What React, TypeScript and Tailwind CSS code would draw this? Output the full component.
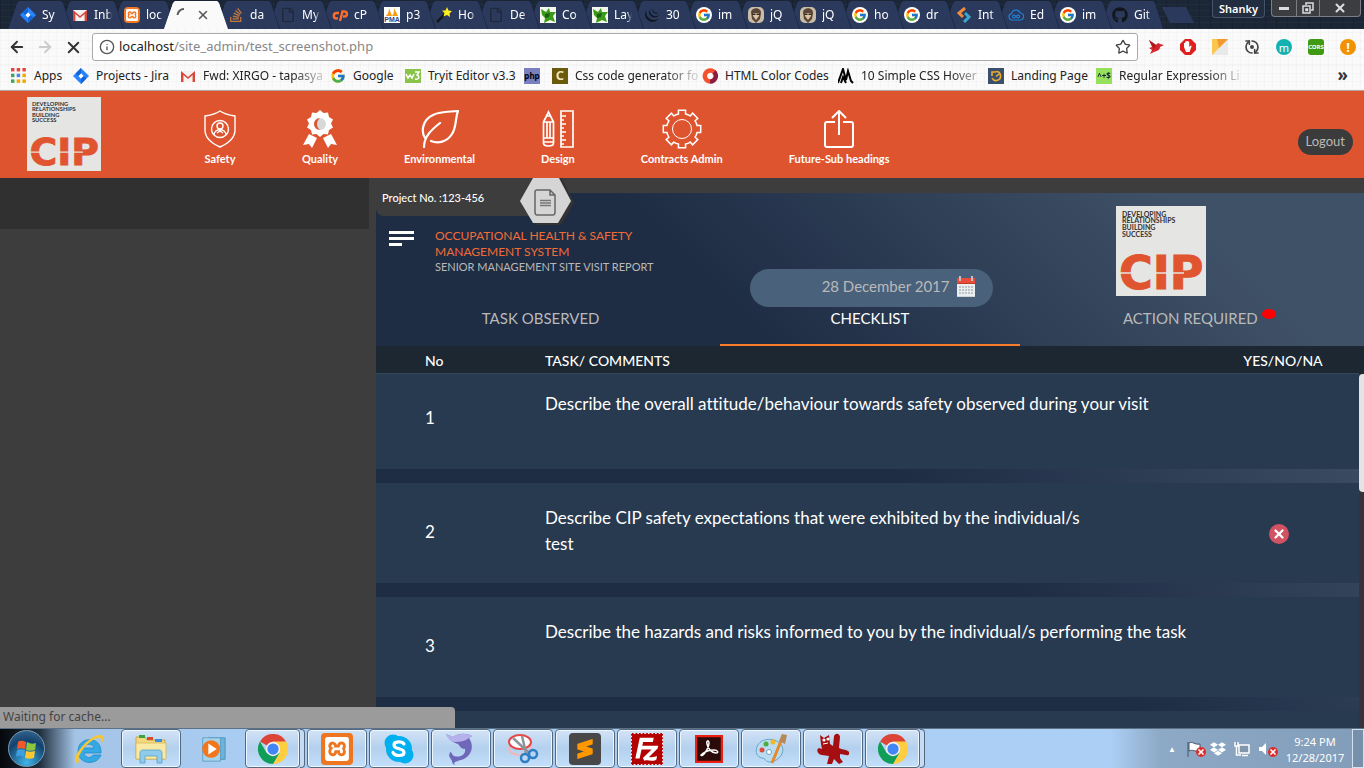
import React from "react";
import { FcGoogle } from "react-icons/fc";
import { FaStackOverflow, FaGithub, FaDropbox } from "react-icons/fa";
import { SiXampp, SiFilezilla, SiJquery, SiSublimetext } from "react-icons/si";
import { ArrowLeft, ArrowRight, X, Info, Star, File, RefreshCw } from "lucide-react";

/* ---------- small icons ---------- */

const Gmail = () => (
  <svg viewBox="0 0 16 16" className="size-4">
    <path d="M1 3h14v11H1z" fill="#f4f1ee" />
    <path d="M1 14V3l7 6 7-6v11h-2.4V7L8 11 3.400 7v7z" fill="#d8453b" />
  </svg>
);
const Jira = () => (
  <svg viewBox="0 0 16 16" className="size-4">
    <path d="M8 0l8 8-8 8-8-8z" fill="#2684ff" />
    <path d="M8 5.300L10.700 8 8 10.700 5.300 8z" fill="#fff" />
    <path d="M8 0v5.300L5.300 8 2.600 5.400zM8 16v-5.300L10.700 8l2.700 2.600z" fill="#1264d8" />
  </svg>
);
const Xampp = () => (
  <span className="flex size-4 items-center justify-center rounded-sm bg-[#f37623] text-white">
    <SiXampp className="size-3" />
  </span>
);
const PageIcon = () => <File className="size-4 text-[#20283a]" strokeWidth={2} />;
const CPanel = () => (
  <svg viewBox="0 0 16 16" className="size-4" fill="none" stroke="#ff6c2c" strokeWidth="2.400">
    <path d="M7 6H4.500a2.700 2.700 0 0 0 0 5.400H6" />
    <path d="M8 14l2.500-9.500H12.500a2.500 2.500 0 0 1 0 5H11" />
  </svg>
);
const Joomla = () => (
  <svg viewBox="0 0 16 16" className="size-4">
    <path d="M0 0h16v16H0z" fill="#f4f8ee" />
    <path d="M1 2l5 3 3-4 1 4 6 0-3 4 2 6-5-2-6 3 1-5-3-3z" fill="#3d9b1c" />
    <path d="M5 7l5-1-1 4-4 1z" fill="#1c5f12" />
  </svg>
);
const Pma = () => (
  <svg viewBox="0 0 16 16" className="size-4">
    <path d="M0 0h16v16H0z" fill="#fff" />
    <path d="M2 9C4 7 5 4 5 1l3 8zM8 9c2-2 2-5 2-8l4 8z" fill="#f89c0e" />
    <text x="8" y="15" textAnchor="middle" fontSize="7" fontWeight="700" fill="#3b3f76" fontFamily="Liberation Sans, sans-serif">PMA</text>
  </svg>
);
const Wand = () => (
  <svg viewBox="0 0 16 16" className="size-4">
    <path d="M1 15L9 7" stroke="#15181c" strokeWidth="2.500" />
    <path d="M11 0l1.500 3.500L16 4l-2.500 2.500L14 10l-3-2-3.500 1.500L8.500 6 6 3.500h3.500z" fill="#fdf01e" />
  </svg>
);
const GoogleDisc = () => (
  <span className="flex size-4 items-center justify-center rounded-full bg-white"><FcGoogle className="size-3.5" /></span>
);
const Face = () => (
  <svg viewBox="0 0 16 16" className="size-4">
    <rect width="16" height="16" rx="5" fill="#c9bda8" />
    <path d="M3 5c1-5 10-5 10 1l-1 6-4 4-4-4z" fill="#5a4536" />
    <path d="M5 6h6v3l-3 4-3-4z" fill="#dcc3a4" />
    <path d="M4.500 6.500h3v1.500h-3zM8.500 6.500h3v1.500h-3z" fill="#32271f" />
  </svg>
);
const Swirl = () => (
  <svg viewBox="0 0 16 16" className="size-4" fill="none" strokeWidth="3">
    <path d="M9 1L3 6l4 4" stroke="#f08a3c" />
    <path d="M8 15l5-5-4-4" stroke="#3aa6d0" />
  </svg>
);
const CloudLoop = () => (
  <svg viewBox="0 0 16 16" className="size-4" fill="none" stroke="#1f7fd6" strokeWidth="1.200">
    <path d="M4 13a3.200 3.200 0 0 1-.5-6.300A4.600 4.600 0 0 1 12.300 6 3.500 3.500 0 0 1 12 13z" />
    <path d="M8 9.500C6.500 7.500 4.500 8 4.500 9.500s2 2 3.500 0 3.500-1.500 3.500 0-2 2-3.500 0z" />
  </svg>
);
const Spinner = () => (
  <svg viewBox="0 0 16 16" className="size-4"><path d="M1.500 8A6.500 6.500 0 0 1 8 2" fill="none" stroke="#5a5a5a" strokeWidth="2" /></svg>
);

const Chrome = ({ className }: { className: string }) => (
  <svg viewBox="0 0 48 48" className={className}>
    <path d="M24 24L3.200 12A24 24 0 0 1 44.800 12z" fill="#db4437" />
    <path d="M24 12h20.800A24 24 0 0 1 24 48l10.400-18z" fill="#ffcd40" />
    <path d="M3.200 12A24 24 0 0 0 24 48l10.400-18H13.600z" fill="#0f9d58" />
    <circle cx="24" cy="24" r="11.500" fill="#f1f1f1" />
    <circle cx="24" cy="24" r="9" fill="#4285f4" />
  </svg>
);

/* ---------- browser chrome ---------- */

const tabs: { label: string; icon: React.ReactNode; active?: boolean }[] = [
  { label: "Sy", icon: <Jira /> },
  { label: "Inb", icon: <Gmail /> },
  { label: "loc", icon: <Xampp /> },
  { label: "", icon: <Spinner />, active: true },
  { label: "da", icon: <FaStackOverflow className="size-4 text-[#c27a3c]" /> },
  { label: "My", icon: <PageIcon /> },
  { label: "cP", icon: <CPanel /> },
  { label: "p3", icon: <Pma /> },
  { label: "Ho", icon: <Wand /> },
  { label: "De", icon: <PageIcon /> },
  { label: "Co", icon: <Joomla /> },
  { label: "Lay", icon: <Joomla /> },
  { label: "30", icon: <SiJquery className="size-3.5 text-[#10161f]" /> },
  { label: "im", icon: <GoogleDisc /> },
  { label: "jQ", icon: <Face /> },
  { label: "jQ", icon: <Face /> },
  { label: "ho", icon: <GoogleDisc /> },
  { label: "dr", icon: <GoogleDisc /> },
  { label: "Int", icon: <Swirl /> },
  { label: "Ed", icon: <CloudLoop /> },
  { label: "im", icon: <GoogleDisc /> },
  { label: "Git", icon: <FaGithub className="size-4 text-[#12161d]" /> },
];

const tabShape = "[clip-path:polygon(0_100%,9px_2px,11px_0,53px_0,55px_2px,100%_100%)]";

function TabStrip() {
  return (
    <div className="flex h-[29px] items-start justify-between bg-[#1b2636] bg-[repeating-linear-gradient(0deg,#ffffff08_0_1px,transparent_1px_6px),repeating-linear-gradient(90deg,#00000022_0_1px,transparent_1px_11px)]">
      <ul className="flex h-full items-end pl-2">
        {tabs.map((t, i) => (
          <li key={i} className="relative -mr-3 h-7 w-16 shrink-0" style={{ zIndex: t.active ? 40 : 30 - i }}>
            <div className={`h-full w-full ${tabShape} ${t.active ? "bg-[#fafafa]" : "bg-[#1a2540]"} pr-px`}>
              <div className={`flex h-full items-center pl-3 ${tabShape} ${t.active ? "bg-[#fafafa]" : "bg-[#2b3a5c]"}`}>
                <span className="flex size-4 shrink-0 items-center justify-center">{t.icon}</span>
                {t.active ? (
                  <button aria-label="Close tab" className="ml-1 text-[#555]"><X className="size-3.5" strokeWidth={2.500} /></button>
                ) : (
                  <span className="ml-1.5 w-[18px] overflow-hidden whitespace-nowrap text-[12px] text-white [mask-image:linear-gradient(90deg,#000_70%,transparent)]">{t.label}</span>
                )}
              </div>
            </div>
          </li>
        ))}
        <li className="mb-1.5 ml-2.5 h-4 w-8">
          <button aria-label="New tab" className="block h-full w-full bg-[#2b3a5c] [clip-path:polygon(0_0,75%_0,100%_100%,25%_100%)]" />
        </li>
      </ul>
      <div className="flex items-start gap-1.5 pr-[3px]">
        <button className="h-[18px] w-[53px] rounded-b-sm border border-t-0 border-[#46536a] bg-[#222e40] text-[11px] leading-4 font-semibold text-white">Shanky</button>
        <div className="flex h-[17px] overflow-hidden rounded-b-sm border border-t-0 border-[#7b7f84] bg-[#3b3d40] text-[#dcdcdc]">
          <button aria-label="Minimize" className="flex w-6 items-center justify-center"><span className="h-[3px] w-2.5 bg-[#dcdcdc]" /></button>
          <button aria-label="Restore" className="flex w-6 items-center justify-center border-x border-[#7b7f84]">
            <svg viewBox="0 0 12 12" className="size-3" fill="none" stroke="#dcdcdc" strokeWidth="1.500"><path d="M4 3V1h7v7H9M1 4h7v7H1zM4 7h1.500v1.500H4z" /></svg>
          </button>
          <button aria-label="Close" className="flex w-10 items-center justify-center"><X className="size-3.5" strokeWidth={3.500} /></button>
        </div>
      </div>
    </div>
  );
}

const texture =
  "bg-[#fafafa] bg-[repeating-linear-gradient(0deg,#00000005_0_1px,transparent_1px_8px),repeating-linear-gradient(90deg,#00000005_0_1px,transparent_1px_8px)]";

function Toolbar() {
  return (
    <div className={`flex h-9 items-center pr-2 pl-2 ${texture}`}>
      <div className="flex w-[84px] shrink-0 items-center gap-2.5">
        <button aria-label="Back"><ArrowLeft className="size-[18px] text-[#333]" strokeWidth={2.500} /></button>
        <button aria-label="Forward"><ArrowRight className="size-[18px] text-[#ccc]" strokeWidth={2.500} /></button>
        <button aria-label="Stop"><X className="size-[19px] text-[#333]" strokeWidth={2.500} /></button>
      </div>
      <div className="flex h-7 min-w-0 flex-1 items-center rounded-[3px] border border-[#aaa] bg-white px-1.5">
        <Info className="size-4 text-[#555]" />
        <span className="ml-1 flex-1 text-[13px] text-[#888]"><span className="text-[#222]">localhost</span>/site_admin/test_screenshot.php</span>
        <button aria-label="Bookmark"><Star className="size-4 text-[#444]" /></button>
      </div>
      <ul className="flex shrink-0 items-center gap-4 pl-2.5">
        <li><svg viewBox="0 0 16 16" className="size-4"><path d="M1 1l7 5c1-2 3-2 4-1l4 1-4 2c0 3-3 4-6 5l-4 2 2-4-3-2 3-1z" fill="#d5252b" /><path d="M1 1l7 5-2 4z" fill="#a8181d" /></svg></li>
        <li><svg viewBox="0 0 16 16" className="size-4"><path d="M5 0h6l5 5v6l-5 5H5l-5-5V5z" fill="#e01f1f" /><path d="M4 8V4h1.200v3V2.500h1.300V7 2h1.400v5-4.500h1.300V8l1.500-1.500 1 .6L9.500 13H6z" fill="#fff" /></svg></li>
        <li><svg viewBox="0 0 16 16" className="size-4"><path d="M0 0h16v16H0z" fill="#e9e9e9" /><path d="M0 0h16L0 16z" fill="#f9c74c" /><path d="M5 0h11L7 9z" fill="#f39a2e" /></svg></li>
        <li className="relative flex size-4 items-center justify-center"><RefreshCw className="size-4 rotate-90 text-[#444]" strokeWidth={2.500} /><span className="absolute size-1 rounded-full bg-[#444]" /></li>
        <li className="flex size-4 items-center justify-center rounded-full bg-[#12b2b2] text-[11px] leading-none text-white">m</li>
        <li className="flex size-4 items-center justify-center rounded-[3px] bg-[#3f9a12] text-[6px] font-bold text-white">CORS</li>
        <li className="flex size-4 items-center justify-center rounded-full bg-[#f39200] text-[13px] leading-none font-bold text-white">!</li>
      </ul>
    </div>
  );
}

const AppsGrid = () => (
  <svg viewBox="0 0 14 14" className="size-4">
    {["#e8453c", "#e8453c", "#e8453c", "#3aa757", "#4688f1", "#f2a600", "#3aa757", "#f2a600", "#f2a600"].map((c, i) => (
      <rect key={i} x={(i % 3) * 5} y={Math.floor(i / 3) * 5} width="3" height="3" fill={c} />
    ))}
  </svg>
);

const bookmarks: { label: string; icon: React.ReactNode; width: string; fade?: boolean }[] = [
  { label: "Apps", width: "w-[62px]", icon: <AppsGrid /> },
  { label: "Projects - Jira", width: "w-[107px]", icon: <Jira /> },
  { label: "Fwd: XIRGO - tapasya", width: "w-[150px]", icon: <Gmail />, fade: true },
  { label: "Google", width: "w-[75px]", icon: <FcGoogle className="size-4" /> },
  { label: "Tryit Editor v3.3", width: "w-[119px]", icon: <svg viewBox="0 0 16 16" className="size-4"><path d="M0 1h16v14H0z" fill="#8bc34a" /><path d="M1 6l2 4 2-3 2 3 2-4M10 4h4l-2 3c3 1 2 5-2 4" fill="none" stroke="#fff" strokeWidth="1.500" /></svg> },
  { label: "", width: "w-7", icon: <span className="flex size-4 items-center justify-center bg-[#7a7fc0] text-[8px] font-bold text-black">php</span> },
  { label: "Css code generator fo", width: "w-[150px]", icon: <span className="flex size-4 items-center justify-center bg-[#6b5a0c] text-[13px] leading-none font-bold text-[#efe6b8]">C</span>, fade: true },
  { label: "HTML Color Codes", width: "w-[136px]", icon: <svg viewBox="0 0 16 16" className="size-4" fill="none" strokeWidth="4.500"><path d="M13 5A5.500 5.500 0 1 0 8 13.500" stroke="#f4502e" /><path d="M12 4a5.500 5.500 0 0 1-4 9.500" stroke="#8e1c3d" /></svg> },
  { label: "10 Simple CSS Hover", width: "w-[150px]", icon: <svg viewBox="0 0 16 16" className="size-4"><path d="M0 15L5 1l3 11 2-9 3 10 2 2M3 15l2-6 3 6" fill="none" stroke="#000" strokeWidth="2" /></svg>, fade: true },
  { label: "Landing Page", width: "w-[108px]", icon: <svg viewBox="0 0 16 16" className="size-4"><path d="M0 0h16v16H0z" fill="#3a4f6b" /><path d="M8 3.500A4.500 4.500 0 1 1 4 10M4 8V4h4M8 8.500L11 6" fill="none" stroke="#f0ad2c" strokeWidth="1.600" /></svg> },
  { label: "Regular Expression Li", width: "w-[150px]", icon: <span className="flex size-4 items-center justify-center bg-[#97e05c] text-[8px] leading-none font-bold text-[#123]">^+$</span>, fade: true },
];

function Bookmarks() {
  return (
    <div className={`flex h-[26px] items-center justify-between border-b border-[#b3a6a0] pr-4 pb-1 pl-[11px] ${texture}`}>
      <ul className="flex min-w-0 items-center">
        {bookmarks.map((b, i) => (
          <li key={i} className={`shrink-0 ${b.width}`}>
            <a
              href="#"
              className={`flex items-center gap-[7px] text-[12px] leading-4 whitespace-nowrap text-[#222] ${b.fade ? "[mask-image:linear-gradient(90deg,#000_75%,#0003_95%)]" : ""}`}
            >
              <span className="shrink-0">{b.icon}</span>
              <span>{b.label}</span>
            </a>
          </li>
        ))}
      </ul>
      <button aria-label="More bookmarks" className="pb-0.5 text-[17px] leading-4 font-bold text-[#333]">»</button>
    </div>
  );
}

/* ---------- application ---------- */

const CipLogo = ({ className }: { className: string }) => (
  <svg viewBox="0 0 90 90" className={className} fontFamily="Lato, sans-serif">
    <path d="M0 0h90v90H0z" fill="#e5e5e3" />
    <g fontSize="7" fontWeight="700" fill="#333">
      <text x="6" y="11">DEVELOPING</text>
      <text x="6" y="17">RELATIONSHIPS</text>
      <text x="6" y="24">BUILDING</text>
      <text x="6" y="31">SUCCESS</text>
    </g>
    <text x="3" y="83" fontSize="46" fontWeight="700" fontFamily="DejaVu Sans, sans-serif" fill="#e0542f" stroke="#e0542f" strokeWidth="1">CIP</text>
    <path d="M4 67h13M38 67h30" stroke="#e5e5e3" strokeWidth="1.500" />
  </svg>
);

const gearPath = Array.from({ length: 8 }, (_, i) => {
  const pt = (r: number, deg: number) => {
    const a = ((i * 45 + deg) * Math.PI) / 180;
    return `${(20 + r * Math.sin(a)).toFixed(1)} ${(20 - r * Math.cos(a)).toFixed(1)}`;
  };
  return `${i ? "L" : "M"}${pt(15.5, -13)}L${pt(19, -11)}L${pt(19, 11)}L${pt(15.5, 13)}A15.500 15.500 0 0 1 ${pt(15.5, 32)}`;
}).join("") + "Z";

const navItems = [
  {
    label: "Safety",
    icon: (
      <svg viewBox="0 0 32 38" className="h-[38px] w-8" fill="none" stroke="#fff" strokeWidth="1.400">
        <path d="M16 1c4 3 9 4 15 5v14c0 8-6 13-15 17C7 33 1 28 1 20V6c6-1 11-2 15-5z" />
        <circle cx="16" cy="19" r="8.500" /><circle cx="16" cy="16" r="3" />
        <path d="M10 25c0-7 12-7 12 0M13 23l3-2 3 2" />
      </svg>
    ),
  },
  {
    label: "Quality",
    icon: (
      <svg viewBox="0 0 34 38" className="h-[38px] w-[34px]">
        <path d="M6 24L0 35l6-1 3 4 5-10zM28 24l6 11-6-1-3 4-5-10z" fill="#fff" />
        <path d="M17 0l3.500 3 4.500-.5 1 4.500 4 2.500-2 4 2 4-4 2.500-1 4.500-4.500-.5L17 27l-3.500-3-4.500.5L8 20l-4-2.500 2-4-2-4L8 7l1-4.500 4.500.5z" fill="#fff" />
        <circle cx="17" cy="14" r="6" fill="#d8d8d8" /><path d="M17 8a6 6 0 0 0 0 12c-4-3-4-9 0-12z" fill="#de542f" />
      </svg>
    ),
  },
  {
    label: "Environmental",
    icon: (
      <svg viewBox="0 0 38 38" className="size-[38px]" fill="none" stroke="#fff" strokeWidth="2.200" strokeLinecap="round">
        <path d="M3 37c0-10 7-17 16-24M4 28C0 22 1 10 12 5 20 1 28 2 37 1c-3 7-1 15-6 23-5 8-14 10-21 7" />
      </svg>
    ),
  },
  {
    label: "Design",
    icon: (
      <svg viewBox="0 0 32 38" className="h-[38px] w-8" fill="none" stroke="#fff" strokeWidth="1.700">
        <path d="M1.500 12L6.500 2l5 10v21c0 4-10 4-10 0zM2 12h9M2 28h9M2 32h9M5 12v16M8 12v16M4.500 6h4" />
        <path d="M19 1h12v36H19zM19 6h5M19 10h3M19 14h5M19 18h3M19 22h5M19 26h3M19 30h5M19 34h3" />
      </svg>
    ),
  },
  {
    label: "Contracts Admin",
    icon: (
      <svg viewBox="0 0 40 40" className="size-10" fill="none" stroke="#fff" strokeWidth="1.500">
        <path d={gearPath} /><circle cx="20" cy="20" r="9.500" strokeWidth="1" />
      </svg>
    ),
  },
  {
    label: "Future-Sub headings",
    icon: (
      <svg viewBox="0 0 30 38" className="h-[38px] w-[30px]" fill="none" stroke="#fff" strokeWidth="2">
        <path d="M11 12H3c-1 0-2 1-2 2v21c0 1 1 2 2 2h24c1 0 2-1 2-2V14c0-1-1-2-2-2h-8M15 25V2M8 8l7-7 7 7" />
      </svg>
    ),
  },
];

function TopNav() {
  return (
    <header className="flex h-[87px] shrink-0 items-center justify-between bg-[#de542f] pr-[11px] pb-0.5 pl-[27px]">
      <nav className="flex items-center gap-[103px]">
        <CipLogo className="size-[74px]" />
        <ul className="flex gap-[66px] pt-2">
          {navItems.map((n) => (
            <li key={n.label}>
              <a href="#" className="flex flex-col items-center text-[11px] leading-4 font-bold text-white">
                <span className="flex h-10 items-center">{n.icon}</span>
                <span className="mt-0.5">{n.label}</span>
              </a>
            </li>
          ))}
        </ul>
      </nav>
      <button className="mt-4 h-[26px] rounded-full bg-[#3b3b3b] px-2 text-[13px] text-[#b9b9b9]">Logout</button>
    </header>
  );
}

const Calendar = () => (
  <svg viewBox="0 0 18 21" className="h-[21px] w-[18px]">
    <path d="M0 2h18v19H0z" fill="#eceff0" /><path d="M0 2h18v6H0z" fill="#e74c3c" /><path d="M0 7h18v1H0z" fill="#c0392b" /><path d="M0 20h18v1H0z" fill="#cfd4d6" />
    <path d="M2 0h2v5H2zM14 0h2v5h-2z" fill="#bdc3c7" />
    {[10, 13, 16].map((y) => [2, 5, 8, 11, 14].map((x) => <rect key={`${x}-${y}`} x={x} y={y} width="2" height="2" fill="#bdc3c7" />))}
  </svg>
);

function PanelHeader() {
  return (
    <div>
      <div className="grid h-[114px] grid-cols-3">
        <div className="flex items-start gap-[21px] pt-[35px] pl-[13px]">
          <button aria-label="Menu" className="mt-[3px] flex w-[25px] shrink-0 flex-col gap-[3px]">
            <span className="h-[3px] w-full bg-white" /><span className="h-[3px] w-full bg-white" /><span className="h-[3px] w-[13px] bg-white" />
          </button>
          <h1 className="text-[12px] leading-4 whitespace-nowrap text-[#b9b9b9]">
            <span className="block text-[#f26c38]">OCCUPATIONAL HEALTH &amp; SAFETY<br />MANAGEMENT SYSTEM</span>
            <span className="block text-[11px] leading-[14px]">SENIOR MANAGEMENT SITE VISIT REPORT</span>
          </h1>
        </div>
        <div className="flex items-end justify-center pl-1">
          <button className="flex h-[38px] w-[243px] items-center justify-end gap-2 rounded-full bg-[#4a617b] pr-[18px] pb-1 text-[15px] text-[#b9b9b9]">
            <span>28 December 2017</span>
            <Calendar />
          </button>
        </div>
        <div className="pt-[13px] pl-[81px]"><CipLogo className="size-[90px]" /></div>
      </div>
      <div className="grid h-[39px] grid-cols-3 justify-items-center text-[15px] leading-[22px] text-[#b9b9b9]">
        <a href="#">TASK OBSERVED</a>
        <a href="#" className="w-[300px] border-b-2 border-[#f97c2b] text-center text-white">CHECKLIST</a>
        <a href="#" className="flex items-start gap-1">ACTION REQUIRED<span className="mt-0.5 h-2.5 w-3.5 rounded-[50%] bg-[#f00]" /></a>
      </div>
    </div>
  );
}

const rows = [
  { no: "1", lines: ["Describe the overall attitude/behaviour towards safety observed during your visit"] },
  { no: "2", lines: ["Describe CIP safety expectations that were exhibited by the individual/s", "test"], failed: true },
  { no: "3", lines: ["Describe the hazards and risks informed to you by the individual/s performing the task"] },
  { no: "", lines: [""] },
];

function Checklist() {
  return (
    <div className="flex min-h-0 flex-1">
      <table className="h-0 flex-1 border-separate border-spacing-0 text-left text-[17px] text-white [font-variant-ligatures:none]">
        <thead>
          <tr className="h-7 bg-[#1c2732] text-[14px]">
            <th className="w-[169px] border-b border-[#35475a] pt-0.5 pl-[49px] font-medium">No</th>
            <th className="border-b border-[#35475a] pt-0.5 font-medium">TASK/ COMMENTS</th>
            <th className="w-40 border-b border-[#35475a] pt-0.5 pl-2 text-center font-medium">YES/NO/NA</th>
          </tr>
        </thead>
        <tbody>
          {rows.map((r, i) => {
            const cell = "border-b-[14px] border-transparent bg-[#283a4f] bg-clip-padding align-top leading-[26px]";
            return (
              <tr key={i} className={i === 0 ? "h-[109px]" : "h-[114px]"}>
                <td className={`${cell} pl-[49px] ${i === 0 ? "pt-[31px]" : "pt-9"}`}>{r.no}</td>
                <td className={`${cell} ${i === 0 ? "pt-[17px]" : "pt-[22px]"}`}>{r.lines.map((l) => <p key={l}>{l}</p>)}</td>
                <td className={`${cell} pt-[41px]`}>
                  {r.failed && (
                    <button aria-label="No" className="mx-auto flex size-5 items-center justify-center rounded-full bg-[#d05263]"><X className="size-3.5 text-white" strokeWidth={4} /></button>
                  )}
                </td>
              </tr>
            );
          })}
        </tbody>
      </table>
      <div className="flex w-[5px] flex-col bg-[#38323d]">
        <span className="h-7 bg-[#1c2732]" />
        <span className="h-[118px] rounded-l-sm bg-[#e4e4e4]" />
      </div>
    </div>
  );
}

function ProjectTab() {
  return (
    <div className="absolute top-0 left-0 z-10 flex h-[38px] items-start rounded-bl-lg bg-[#3d3d3d] pl-1.5">
      <span className="w-[138px] pt-3 text-[11px] leading-4 font-medium text-white">Project No. :123-456</span>
      <svg viewBox="0 0 54 48" className="-mr-7 h-12 w-[54px]">
        <path d="M15 0h27l12 25-13 22H17z" fill="#333" />
        <path d="M13 0h26l12 23-13 22H13L0 23z" fill="#d5d5d5" />
        <path d="M17 12h13l5 5v17c0 2-1 3-2 3H17c-1 0-2-1-2-3V14c0-1 1-2 2-2zM30 12v5h5" fill="none" stroke="#666" strokeWidth="1.500" />
        <path d="M20 22.500h11M20 25h11M20 27.500h11" stroke="#777" strokeWidth="1.500" />
      </svg>
    </div>
  );
}

/* ---------- desktop taskbar ---------- */

const Ie = () => (
  <svg viewBox="0 0 32 32" className="size-8">
    <path d="M28 20H11c1 5 7 6 9 2h8c-4 11-23 10-23-4C5 3 29 2 28 20zM11 15h10c-1-5-9-5-10 0z" fill="#35a9e4" stroke="#1b84c4" strokeWidth=".7" />
    <path d="M3 30C-3 24 18 0 28 2c3 1 3 4 1 8 0-4-1-5-4-5C17 6 3 22 6 29z" fill="#f7c631" />
  </svg>
);
const Explorer = () => (
  <svg viewBox="0 0 32 30" className="h-8 w-8">
    <path d="M1 3h9l2 3h18v19H1z" fill="#f2d980" stroke="#c29f3a" strokeWidth=".8" /><path d="M4 1h6v3H4z" fill="#3ba53b" /><path d="M12 3h6v3h-6z" fill="#d9482f" /><path d="M20 5h7v3h-7z" fill="#3b8fd9" />
    <path d="M1 9h30v16H1z" fill="#f8e9a5" stroke="#d5b959" strokeWidth=".8" /><path d="M5 29V19c0-2 1-3 3-3h16c2 0 3 1 3 3v10h-5v-7H10v7z" fill="#8fcbea" stroke="#559fc8" strokeWidth=".8" />
  </svg>
);
const Media = () => (
  <svg viewBox="0 0 30 30" className="size-7"><path d="M10 3h18v23H10z" fill="#6db3d8" stroke="#4e93ba" /><path d="M4 3h19v25H4z" fill="#a5d3ec" stroke="#5f9ec4" /><circle cx="13" cy="15" r="9.500" fill="#f2761c" /><path d="M10 9l9 6-9 6z" fill="#fff" /></svg>
);
const Skype = () => (
  <svg viewBox="0 0 30 30" className="size-[30px]"><circle cx="9" cy="9" r="8.500" fill="#00aff0" /><circle cx="21" cy="21" r="8.500" fill="#00aff0" /><circle cx="15" cy="15" r="13" fill="#00aff0" /><path d="M20 10c-2-3-10-3-10 1 0 5 10 2.500 10 7.500 0 4-9 4-11 0" fill="none" stroke="#fff" strokeWidth="3.200" strokeLinecap="round" /></svg>
);
const Dolphin = () => (
  <svg viewBox="0 0 34 32" className="h-8 w-[34px]">
    <path d="M2 1l7 3c6-4 13-4 19-1l-3 2c6 9 2 19-8 22-3 1-5 1-7 3l1 2c-2-1-3-2-3-4l-3-5 1-4c2 0 2 3 4 4 7 2 12-2 11-7-3 0-5-2-7-5-4-1-9-4-12-10z" fill="#6f68ba" />
    <path d="M2 1l7 3c6-4 13-4 19-1l-3 2c-4 3-9 4-14 4-4 0-7-3-9-8z" fill="#b5b1ec" />
  </svg>
);
const Snip = () => (
  <svg viewBox="0 0 32 32" className="size-8" fill="none"><ellipse cx="13" cy="16" rx="11" ry="6" stroke="#f3b6b6" strokeWidth="2" /><ellipse cx="13" cy="9" rx="11" ry="7" fill="#fff" stroke="#e54848" strokeWidth="2" /><path d="M6 5l16 15M15 3l4 17" stroke="#8d959c" strokeWidth="2.500" /><circle cx="18" cy="25" r="4" stroke="#2c7fc4" strokeWidth="2.500" /><circle cx="26" cy="21" r="4" stroke="#2c7fc4" strokeWidth="2.500" /></svg>
);
const Acrobat = () => (
  <svg viewBox="0 0 28 28" className="size-7"><path d="M1 1h26v26H1z" fill="#2b0a0a" stroke="#ea2015" strokeWidth="2.500" /><path d="M6 20c2 3 8-8 8-12 0-3-3-3-2 1 1 5 5 9 9 9 3 0 2-3-2-3-4 0-9 1-13 5z" fill="none" stroke="#fff" strokeWidth="1.500" /></svg>
);
const Paint = () => (
  <svg viewBox="0 0 32 32" className="size-8"><path d="M2 14C5 4 22 4 27 13c3 7-3 15-12 16-5 0-4-4-8-4-5-1-7-6-5-11z" fill="#b9dcf0" stroke="#6aa5c6" /><circle cx="7" cy="17" r="2.500" fill="#e34a3d" /><circle cx="11" cy="11" r="2.500" fill="#4aae3f" /><circle cx="18" cy="9" r="2.500" fill="#f3b91c" /><circle cx="14" cy="19" r="2.500" fill="#fff" stroke="#6aa5c6" /><path d="M17 30l9-22" stroke="#e38b2c" strokeWidth="3" /><path d="M24 8l3-7 5 1-2 9z" fill="#b58a58" /></svg>
);
const RedCat = () => (
  <svg viewBox="0 0 32 32" className="size-8">
    <path d="M3 2l4 3 5-3 1 9 3 2 1-10c2-4 6-2 6 1l-1 11c3 2 6 1 9 3s1 5-2 4l-6-1v4l3 4-4 2-5-5-2 5h-5l2-8-7-1c-5-1-6-6-3-7l3 1-1-5z" fill="#a60f12" />
    <circle cx="7" cy="7" r="1.600" fill="#fff" /><circle cx="11" cy="6" r="1.600" fill="#fff" /><path d="M6 11l5-1" stroke="#fff" />
  </svg>
);

const apps: { name: string; icon: React.ReactNode; open?: boolean; stacked?: boolean }[] = [
  { name: "Explorer", icon: <Explorer />, open: true },
  { name: "Media Player", icon: <Media /> },
  { name: "Chrome", icon: <Chrome className="size-[30px]" />, open: true, stacked: true },
  { name: "XAMPP", icon: <span className="flex size-8 items-center justify-center rounded-sm bg-[#ee7621] text-white"><SiXampp className="size-6" /></span>, open: true },
  { name: "Skype", icon: <Skype />, open: true },
  { name: "MySQL", icon: <Dolphin />, open: true },
  { name: "Snipping Tool", icon: <Snip />, open: true },
  { name: "Sublime Text", icon: <span className="flex size-8 items-center justify-center rounded-sm bg-[#484848] text-[#ff9800]"><SiSublimetext className="size-5" /></span>, open: true },
  { name: "FileZilla", icon: <span className="flex size-8 items-center justify-center bg-white text-[#b30000]"><SiFilezilla className="size-8" /></span>, open: true },
  { name: "Acrobat", icon: <Acrobat />, open: true },
  { name: "Paint", icon: <Paint />, open: true },
  { name: "IrfanView", icon: <RedCat />, open: true },
  { name: "Chrome window", icon: <Chrome className="size-[30px]" />, open: true, stacked: true },
];

const ErrorDot = () => (
  <span className="absolute -right-1 bottom-0 flex size-2.5 items-center justify-center rounded-full bg-[#d9302c]"><X className="size-2 text-white" strokeWidth={5} /></span>
);

const glass = "rounded-sm border border-[#54697f] bg-[linear-gradient(#d3e3f6,#b3d0ee_50%,#c3dffb)] shadow-[inset_0_0_0_1px_#eef6ff]";

function Taskbar() {
  return (
    <footer className="flex h-10 shrink-0 items-center justify-between border-t border-[#5d7186] bg-[linear-gradient(90deg,#05070b_0,#20303f_40px,#a4c4e6_75px,#a9cdf2_240px,#acd0f5_1110px,#8da9c6_1160px,#829db9_100%)]">
      <div className="flex h-full items-center">
        <button aria-label="Start" className="ml-2 flex size-[37px] items-center justify-center rounded-full border border-[#7b9db5] bg-[radial-gradient(circle_at_50%_90%,#3fb5e8,#14426e_60%,#3f6f97)]">
          <svg viewBox="0 0 24 24" className="size-6"><path d="M3 5c3-2 5-1 8 0l-1 7c-3-1-6-1-8 0z" fill="#f0592b" /><path d="M12 5c3 2 6 2 9 1l-1 7c-3 1-6 1-9 0z" fill="#8cc63e" /><path d="M2 13c3-1 5-1 8 0l-1 7c-3-1-5-2-8 0z" fill="#3d9fe0" /><path d="M11 14c3 1 5 1 9 0l-1 7c-3 1-6 1-9 0z" fill="#fdc82f" /></svg>
        </button>
        <button aria-label="Internet Explorer" className="mr-4 ml-7"><Ie /></button>
        <ul className="flex gap-0.5">
          {apps.map((a) => (
            <li key={a.name} className="flex w-[60px]">
              <button aria-label={a.name} className={`flex h-[39px] min-w-0 flex-1 items-center justify-center ${a.open ? glass : ""}`}>
                {a.icon}
              </button>
              {a.stacked && <span className="h-[39px] w-[5px] rounded-r-sm border border-l-0 border-[#54697f] bg-[#c5dcf4]" />}
            </li>
          ))}
        </ul>
      </div>
      <div className="flex h-full items-center text-white">
        <div className="flex items-center gap-2">
          <span className="pr-0.5 text-[8px]">▲</span>
          <span className="relative"><svg viewBox="0 0 16 16" className="size-4"><path d="M2 1v15M3 2c4-2 5 2 11 1v7c-6 1-7-2-11 0z" fill="#fff" stroke="#42566b" strokeWidth="1" /></svg><ErrorDot /></span>
          <FaDropbox className="size-4" />
          <svg viewBox="0 0 16 16" className="size-4" fill="#8195ab" stroke="#fff" strokeWidth="1.500"><path d="M5 4h10v8H5zM8 14.500h6M1 1v4h3V1M2.500 5v9H7" /></svg>
          <span className="relative"><svg viewBox="0 0 16 16" className="size-4"><path d="M1 6h3l4-4v12l-4-4H1z" fill="#fff" /></svg><ErrorDot /></span>
        </div>
        <time className="w-[78px] pt-0.5 pl-1 text-center text-[11px] leading-4"><span className="block">9:24 PM</span><span className="block">12/28/2017</span></time>
        <button aria-label="Show desktop" className="h-full w-3 border border-[#d5e2ee] bg-[#7690ab]" />
      </div>
    </footer>
  );
}

export default function App() {
  return (
    <div className="flex h-screen flex-col overflow-hidden bg-[#3d3d3d] font-['Noto_Sans',sans-serif]">
      <div className="shrink-0">
        <TabStrip />
        <Toolbar />
        <Bookmarks />
      </div>
      <div className="relative flex min-h-0 flex-1 flex-col font-[Lato,sans-serif]">
        <TopNav />
        <div className="flex min-h-0 flex-1 gap-[7px]">
          <aside className="w-[369px] shrink-0"><div className="h-[51px] bg-[#303030]" /></aside>
          <main className="relative flex min-w-0 flex-1 flex-col pt-[15px]">
            <ProjectTab />
            <section className="flex min-h-0 flex-1 flex-col overflow-hidden bg-[linear-gradient(45deg,#1e2c44_51%,#3f5167_87%)]">
              <PanelHeader />
              <Checklist />
            </section>
          </main>
        </div>
        <div className="absolute bottom-0 left-0 z-20 h-[21px] w-1/3 rounded-tr bg-[#9b9b9b] pl-[3px] font-['Noto_Sans',sans-serif] text-[12px] leading-5 text-[#444]">Waiting for cache...</div>
      </div>
      <Taskbar />
    </div>
  );
}
